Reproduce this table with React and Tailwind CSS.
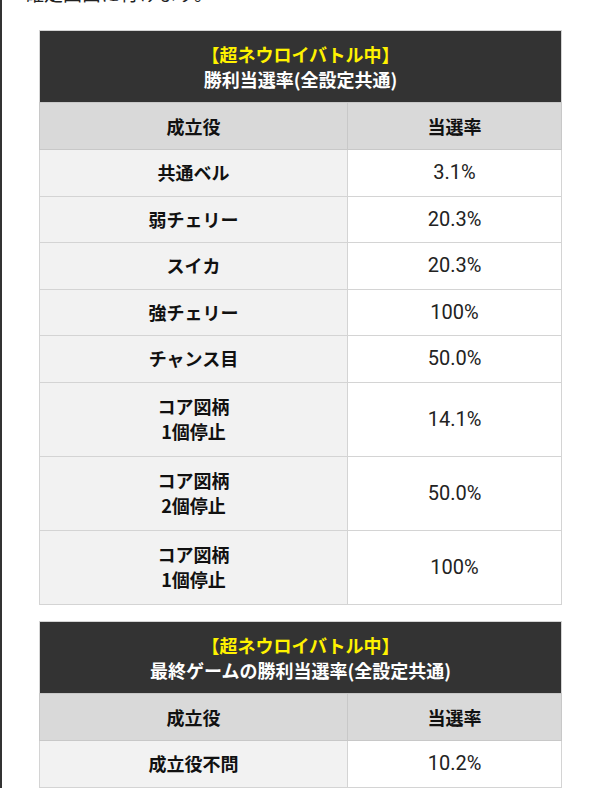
import React from "react";

const table1 = [
  { name: ["共通ベル"], rate: "3.1%" },
  { name: ["弱チェリー"], rate: "20.3%" },
  { name: ["スイカ"], rate: "20.3%" },
  { name: ["強チェリー"], rate: "100%" },
  { name: ["チャンス目"], rate: "50.0%" },
  { name: ["コア図柄", "1個停止"], rate: "14.1%" },
  { name: ["コア図柄", "2個停止"], rate: "50.0%" },
  { name: ["コア図柄", "1個停止"], rate: "100%" },
];

const table2 = [{ name: ["成立役不問"], rate: "10.2%" }];

const RateTable = ({ title, rows }) => {
  return (
    <table className="w-[523px] border-collapse border border-[#d4d4d4] text-[18px] leading-[25px]">
      <thead>
        <tr>
          <th
            colSpan={2}
            className="h-[72px] bg-[#333333] text-center font-bold text-white"
          >
            <div className="text-[#fff200]">【超ネウロイバトル中】</div>
            <div>{title}</div>
          </th>
        </tr>
        <tr>
          <th className="h-[47px] w-[308px] border border-[#c8c8c8] bg-[#d9d9d9] font-bold text-[#111]">
            成立役
          </th>
          <th className="h-[47px] border border-[#c8c8c8] bg-[#d9d9d9] font-bold text-[#111]">
            当選率
          </th>
        </tr>
      </thead>
      <tbody>
        {rows.map((row, i) => (
          <tr key={i}>
            <td
              className={
                row.name.length > 1
                  ? "h-[74.2px] border border-[#d4d4d4] bg-[#f2f2f2] text-center font-bold text-[#111]"
                  : "h-[46.5px] border border-[#d4d4d4] bg-[#f2f2f2] text-center font-bold text-[#111]"
              }
            >
              {row.name.map((line, j) => (
                <div key={j}>{line}</div>
              ))}
            </td>
            <td className="border border-[#d4d4d4] bg-white text-center font-['Roboto',sans-serif] text-[20px] text-[#222]">
              {row.rate}
            </td>
          </tr>
        ))}
      </tbody>
    </table>
  );
};

const App = () => {
  return (
    <div className="min-h-[791px] border-l-2 border-[#333] bg-white font-['Noto_Sans_CJK_JP',sans-serif]">
      <p className="-mt-[18px] pl-[23px] text-[19px] leading-[22px] text-[#222]">
        確定画面に行けます。
      </p>
      <div className="flex flex-col gap-[16px] pt-[26px] pl-[37px]">
        <RateTable title="勝利当選率(全設定共通)" rows={table1} />
        <RateTable title="最終ゲームの勝利当選率(全設定共通)" rows={table2} />
      </div>
    </div>
  );
};

export default App;
